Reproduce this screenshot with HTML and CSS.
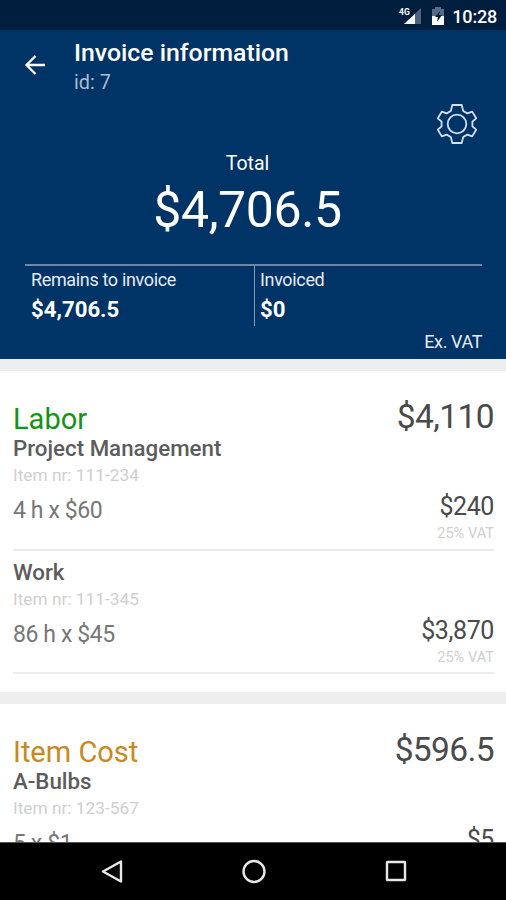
FILE: index.html
```
<!DOCTYPE html>
<html lang="en">
<head>
    <meta charset="UTF-8">
    <meta name="viewport" content="width=device-width, initial-scale=1.0">
    <title>Invoice information</title>
    <link rel="stylesheet" href="styles.css">
</head>
<body>
    <div class="status-bar">
        <svg class="signal" width="24" height="20" viewBox="0 0 24 20">
            <path d="M23 2v16H6z" fill="#4d6480"/>
            <path d="M17 8v10H6z" fill="#fff"/>
            <text x="1" y="8.500" class="network">4G</text>
        </svg>
        <svg class="battery" width="14" height="20" viewBox="0 0 14 20">
            <path d="M4 1h6v2h3v7H1V3h3z" fill="#566b85"/>
            <path d="M1 10h12v9H1z" fill="#fff"/>
            <path d="M9 5l-5 6h3l-1 5 5-7H8z" fill="#001e3e"/>
        </svg>
        <span class="clock">10:28</span>
    </div>

    <header class="header">
        <div class="toolbar">
            <svg class="back" width="22" height="22" viewBox="0 0 22 22">
                <path d="M21 11H2.500M11.500 2L2.500 11l9 9" fill="none" stroke="#fff" stroke-width="2.300"/>
            </svg>
            <div>
                <h1>Invoice information</h1>
                <p class="invoice-id">id: 7</p>
            </div>
        </div>
        <svg class="settings" width="42" height="42" viewBox="0 0 42 42">
            <path d="M16.300 2h9.400l1.500 6 4.200 2.400 4.800-1.800 4 6.700-3.800 3.400v4.600l3.800 3.400-4 6.700-4.800-1.800-4.200 2.400-1.500 6h-9.400l-1.500-6-4.200-2.400-4.800 1.800-4-6.700 3.800-3.400v-4.600L1.800 15.300l4-6.700 4.800 1.800L14.800 8z"/>
            <circle cx="21" cy="21" r="9.300"/>
        </svg>
        <p class="total-label">Total</p>
        <p class="total">$4,706.5</p>
        <div class="summary">
            <div class="summary-cell">
                <p>Remains to invoice</p>
                <strong>$4,706.5</strong>
            </div>
            <div class="summary-cell">
                <p>Invoiced</p>
                <strong>$0</strong>
            </div>
        </div>
        <p class="vat-note">Ex. VAT</p>
    </header>

    <main class="content">
        <section class="card">
            <div class="card-head">
                <h2 class="labor">Labor</h2>
                <span class="sum">$4,110</span>
            </div>
            <div class="item">
                <h3>Project Management</h3>
                <p class="item-nr">Item nr: 111-234</p>
                <div class="item-row">
                    <span class="quantity">4 h x $60</span>
                    <div class="price">
                        <p>$240</p>
                        <small>25% VAT</small>
                    </div>
                </div>
            </div>
            <div class="item">
                <h3>Work</h3>
                <p class="item-nr">Item nr: 111-345</p>
                <div class="item-row">
                    <span class="quantity">86 h x $45</span>
                    <div class="price">
                        <p>$3,870</p>
                        <small>25% VAT</small>
                    </div>
                </div>
            </div>
        </section>

        <section class="card">
            <div class="card-head">
                <h2 class="cost">Item Cost</h2>
                <span class="sum">$596.5</span>
            </div>
            <div class="item">
                <h3>A-Bulbs</h3>
                <p class="item-nr">Item nr: 123-567</p>
                <div class="item-row">
                    <span class="quantity">5 x $1</span>
                    <div class="price">
                        <p>$5</p>
                    </div>
                </div>
            </div>
        </section>
    </main>

    <nav class="nav-bar">
        <svg width="24" height="26" viewBox="0 0 24 26"><path d="M21 2.500v20L3 12.500z"/></svg>
        <svg width="26" height="26" viewBox="0 0 26 26"><circle cx="13" cy="12.500" r="10.500"/></svg>
        <svg width="24" height="26" viewBox="0 0 24 26"><rect x="3" y="3" width="18" height="18" rx="0.500"/></svg>
    </nav>
</body>
</html>
```

FILE: styles.css
```
* {
    box-sizing: border-box;
}

body {
    margin: 0;
    height: 900px;
    display: flex;
    flex-direction: column;
    overflow: hidden;
    font-family: Roboto, sans-serif;
    background: #eee;
}

h1, h2, h3, p {
    margin: 0;
}

.status-bar {
    flex: none;
    height: 30px;
    display: flex;
    justify-content: flex-end;
    align-items: center;
    padding: 2px 9px 0 0;
    background: #001e3e;
    color: #fff;
}

.network {
    font-size: 8.5px;
    font-weight: bold;
    fill: #fff;
}

.battery {
    margin: 0 7px 0 9px;
}

.clock {
    font-size: 18px;
    font-weight: 500;
    letter-spacing: -0.2px;
}

.header {
    flex: none;
    height: 329px;
    display: flex;
    flex-direction: column;
    padding: 9px 24px 0 25px;
    background: #003366;
    color: #fff;
}

.toolbar {
    display: flex;
    height: 64px;
}

.back {
    margin: 15px 28px 0 -1px;
}

h1 {
    font-size: 24.8px;
    font-weight: 500;
    line-height: 28px;
}

.invoice-id {
    margin-top: 3px;
    font-size: 19.8px;
    line-height: 26px;
    color: #adbccf;
}

.settings {
    align-self: flex-end;
    margin-right: 4px;
    fill: none;
    stroke: #d5dff0;
    stroke-width: 1.8;
    stroke-linejoin: round;
}

.total-label {
    margin-top: 7px;
    font-size: 19.5px;
    line-height: 24px;
    text-align: center;
    padding-right: 12px;
}

.total {
    margin-top: 4px;
    padding-right: 12px;
    font-size: 50px;
    line-height: 60px;
    letter-spacing: -0.4px;
    text-align: center;
}

.summary {
    display: flex;
    margin-top: 24px;
    border-top: 2px solid #6f84a8;
}

.summary-cell {
    flex: 1;
    height: 60px;
    padding: 3px 6px 0;
}

.summary-cell:first-child {
    flex: 0 0 229px;
}

.summary-cell + .summary-cell {
    padding-left: 5px;
    border-left: 1px solid #8797b5;
}

.summary-cell p {
    font-size: 18px;
    line-height: 22px;
    letter-spacing: -0.35px;
    color: #e6ecf5;
}

.summary-cell strong {
    display: block;
    margin-top: 4px;
    font-size: 22.2px;
    line-height: 28px;
}

.vat-note {
    margin-top: 5px;
    font-size: 18px;
    line-height: 22px;
    letter-spacing: -0.4px;
    text-align: right;
    color: #e6ecf5;
}

.content {
    flex: 1;
    min-height: 0;
    overflow: hidden;
}

.card {
    margin-top: 12px;
    padding: 25px 12px 18px 13px;
    background: #fff;
}

.card-head {
    display: flex;
    justify-content: space-between;
    height: 38px;
}

h2 {
    margin-top: 6px;
    font-size: 29px;
    font-weight: 400;
    line-height: 34px;
}

.labor {
    color: #149414;
}

.cost {
    color: #cb8720;
}

.sum {
    font-size: 33.5px;
    line-height: 42px;
    letter-spacing: -0.6px;
    color: #4a4a4a;
}

.item {
    height: 117px;
    border-bottom: 2px solid #ececec;
}

.item + .item {
    height: 123px;
    padding-top: 7px;
}

h3 {
    font-size: 22.3px;
    font-weight: 500;
    line-height: 29px;
    color: #5c5c5c;
}

.item-nr {
    margin-top: 1px;
    font-size: 17.3px;
    line-height: 22px;
    color: #cfcfcf;
}

.item-row {
    display: flex;
    justify-content: space-between;
    margin-top: 5px;
}

.quantity {
    margin-top: 6px;
    font-size: 23px;
    line-height: 28px;
    letter-spacing: -0.4px;
    color: #777;
}

.price {
    margin-top: 1px;
    text-align: right;
    font-size: 25px;
    line-height: 30px;
    letter-spacing: -0.4px;
    color: #4a4a4a;
}

.price small {
    display: block;
    margin-top: 2px;
    font-size: 14.6px;
    line-height: 18px;
    letter-spacing: 0;
    color: #cfcfcf;
}

.nav-bar {
    flex: none;
    height: 58px;
    display: flex;
    justify-content: space-between;
    align-items: center;
    padding: 0 98px 0 100px;
    border-top: 1px solid #555;
    background: #000;
}

.nav-bar svg {
    fill: none;
    stroke: #e8e8e8;
    stroke-width: 2.4;
    stroke-linejoin: round;
}
```
